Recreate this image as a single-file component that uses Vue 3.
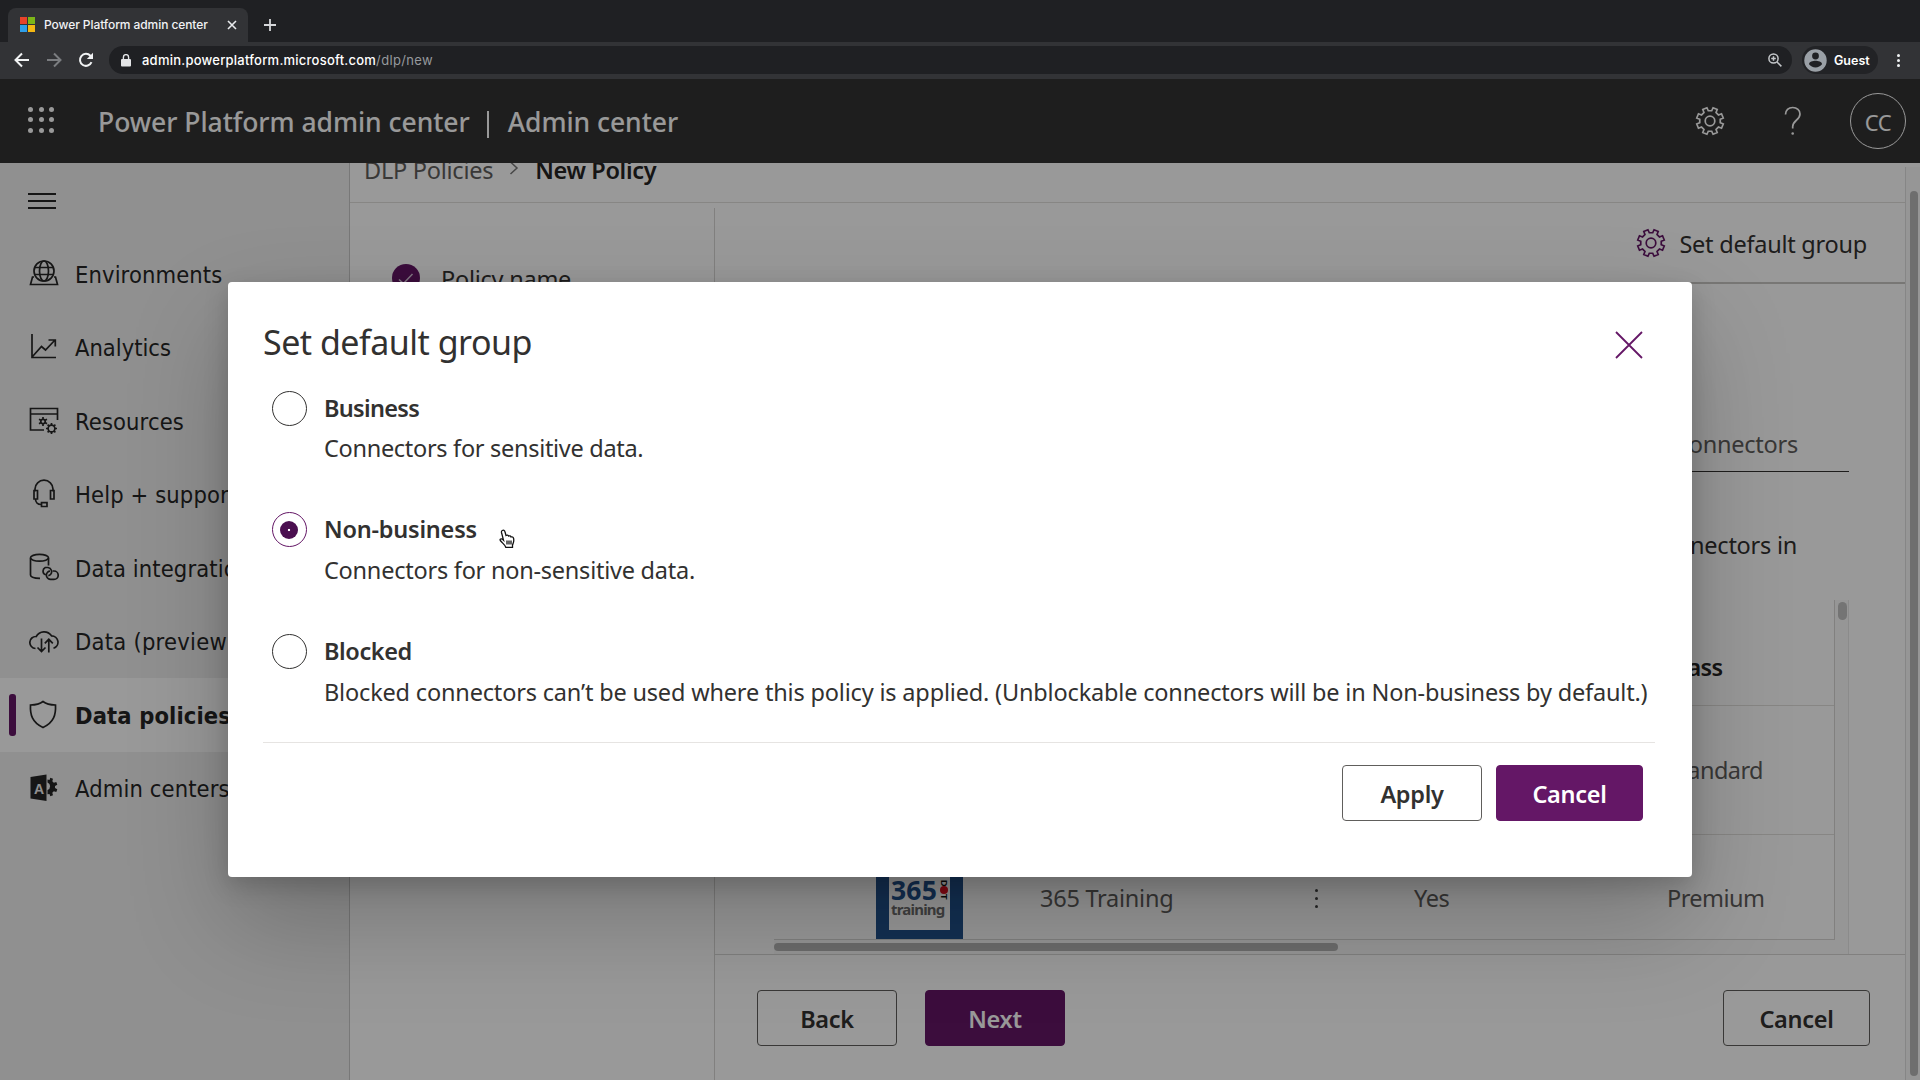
<script setup>
import { ref } from 'vue'

function gearPath(c, outer, inner, top, root) {
  const pts = []
  for (let i = 0; i < 8; i++) {
    const a = 22.5 + i * 45
    for (const [r, d] of [[inner, -root], [outer, -top], [outer, top], [inner, root]]) {
      const t = ((a + d) * Math.PI) / 180
      pts.push(`${(c + r * Math.sin(t)).toFixed(2)} ${(c - r * Math.cos(t)).toFixed(2)}`)
    }
  }
  return `M${pts.join('L')}Z`
}
const gear = gearPath(15, 13.6, 10.4, 9.5, 13)

const nav = [
  { id: 'env', label: 'Environments' },
  { id: 'chart', label: 'Analytics' },
  { id: 'res', label: 'Resources' },
  { id: 'help', label: 'Help + support' },
  { id: 'integ', label: 'Data integration' },
  { id: 'cloud', label: 'Data (preview)' },
  { id: 'shield', label: 'Data policies', active: true },
  { id: 'admin', label: 'Admin centers' },
]

const options = [
  { id: 'business', label: 'Business', text: 'Connectors for sensitive data.' },
  { id: 'non-business', label: 'Non-business', text: 'Connectors for non-sensitive data.' },
  {
    id: 'blocked',
    label: 'Blocked',
    text: 'Blocked connectors can’t be used where this policy is applied. (Unblockable connectors will be in Non-business by default.)',
  },
]
const selected = ref('non-business')
</script>

<template>
  <div class="screen">
    <div class="tabstrip">
      <div class="tab">
        <span class="mslogo"><i></i><i></i><i></i><i></i></span>
        <span class="tab-title">Power Platform admin center</span>
        <svg class="tab-close" width="10" height="10" viewBox="0 0 10 10"><path d="M1 1l8 8M9 1l-8 8" /></svg>
      </div>
      <svg class="tab-add" width="12" height="12" viewBox="0 0 12 12"><path d="M6 0v12M0 6h12" /></svg>
    </div>
    <div class="toolbar">
      <svg class="tb back" width="16" height="16" viewBox="0 0 16 16"><path d="M15 8H2M8 1.5L1.5 8L8 14.5" /></svg>
      <svg class="tb fwd" width="16" height="16" viewBox="0 0 16 16"><path d="M1 8h13M8 1.5L14.5 8L8 14.5" /></svg>
      <svg class="tb reload" width="16" height="16" viewBox="0 0 16 16"><path d="M13.5 10.2A6 6 0 1 1 12.4 3.8L14 5.5" /><path class="fill" d="M15 .8V7H8.8Z" /></svg>
      <div class="address">
        <svg width="10" height="13" viewBox="0 0 10 13"><path d="M1 5h8a1 1 0 0 1 1 1v5.5a1 1 0 0 1-1 1H1a1 1 0 0 1-1-1V6a1 1 0 0 1 1-1z" fill="#e4e5e7" /><path d="M2.4 5.4V3.2a2.6 2.6 0 0 1 5.2 0v2.2" fill="none" stroke="#e4e5e7" stroke-width="1.4" /></svg>
        <span class="url">admin.powerplatform.microsoft.com</span><span class="url dim">/dlp/new</span>
        <svg class="mag" width="14" height="14" viewBox="0 0 14 14"><circle cx="5.5" cy="5.5" r="4.6" /><path d="M9 9l4.4 4.4M5.5 3.2v4.6M3.2 5.5h4.6" /></svg>
      </div>
      <div class="guest">
        <svg width="23" height="23" viewBox="0 0 23 23"><circle cx="11.5" cy="11.5" r="11.2" fill="#9aa0a6" /><circle cx="11.5" cy="7" r="3.4" fill="#202124" /><path d="M5 15.2c0-2.4 4-3.4 6.5-3.4s6.5 1 6.5 3.4c-1.5 2-3.8 3.2-6.5 3.2s-5-1.2-6.5-3.2z" fill="#202124" /></svg>
        <span>Guest</span>
      </div>
      <span class="kebab"><i></i><i></i><i></i></span>
    </div>

    <div class="site">
      <header class="suite">
        <span class="waffle"><i v-for="n in 9" :key="n"></i></span>
        <span class="brand">Power Platform admin center</span>
        <span class="pipe"></span>
        <span class="brand sub">Admin center</span>
        <svg class="suite-gear" width="30" height="30" viewBox="0 0 30 30"><path :d="gear" /><circle cx="15" cy="15" r="4.8" /></svg>
        <svg class="suite-help" width="18" height="30" viewBox="0 0 18 30"><path d="M1.5 8.5C1.5 4 4.5 1.5 8.7 1.5C13 1.5 16 4.3 16 8C16 14 8.7 14.5 8.7 20.5V22.5" /><circle cx="8.7" cy="27.5" r="1.3" /></svg>
        <span class="avatar">CC</span>
      </header>

      <div class="body">
        <nav class="side">
          <span class="burger"><i></i><i></i><i></i></span>
          <a v-for="n in nav" :key="n.id" class="nav" :class="[n.id, { active: n.active }]">
            <svg width="30" height="30" viewBox="0 0 30 30">
              <template v-if="n.id === 'env'">
                <circle cx="15" cy="12" r="10" /><ellipse cx="15" cy="12" rx="4.5" ry="10" /><path d="M5.8 8.5h18.4M5.8 15.5h18.4M5 18H3.5L1.5 25.5h27L26.5 18H25" />
              </template>
              <template v-else-if="n.id === 'chart'">
                <path d="M3 2v23.5h24M3.5 24.5L12.5 14.5L16.5 18L26 8M19.5 8H26.3V14.5" />
              </template>
              <template v-else-if="n.id === 'res'">
                <path d="M15 24H1.5V2.5h27V14M1.5 8h27" />
                <circle cx="14" cy="15.5" r="2.2" /><path d="M14 11v2M14 18v2M10 13.3l2 1M16 16.5l2 1.2M10 17.7l2-1.2M16 14.3l2-1" />
                <circle cx="22.5" cy="22.5" r="3.4" /><path d="M22.5 17v2M22.5 26v2M17 22.5h2M26 22.5h2M18.6 18.6l1.5 1.5M25 25l1.4 1.4M18.6 26.4L20 25M25 20l1.4-1.4" />
              </template>
              <template v-else-if="n.id === 'help'">
                <path d="M6 12.5V10a9 8.8 0 0 1 18 0V12.5M5 11.5h3.5v8.5H5zM21.5 11.5h3.5v8.5h-3.5zM6.5 20C6.5 23 8.5 25.5 12 25.500M12.500 23.700h5.500v3.800h-5.500z" />
              </template>
              <template v-else-if="n.id === 'integ'">
                <ellipse cx="10.5" cy="4.8" rx="9" ry="3.4" /><path d="M1.5 5V22c0 2 4 3.300 9.500 3.400M19.500 5V12.500" />
                <path d="M16.500 21.800A4 4 0 0 1 16.300 14.500H19A4.200 4.200 0 0 1 21.500 21.500C20.800 22.300 20 22.600 19.300 22.600M23.800 18H25a4.200 4.200 0 0 1 0 8.400h-3.500a4.200 4.200 0 0 1-2.800-7.200C19.300 18.600 20.300 18.200 21 18.200" />
              </template>
              <template v-else-if="n.id === 'cloud'">
                <path d="M6.500 22.500A6 6 0 0 1 7.200 10.500A9 9 0 0 1 22.500 9.800A6.400 6.400 0 0 1 24.500 22.300M12.500 12.500V25M8.500 21.500l4 4l4-4M19.800 26.500V13.500M15.800 17.300l4-4l4 4" />
              </template>
              <template v-else-if="n.id === 'shield'">
                <path d="M14 1.500C10.500 4.300 6 5 1.500 5C1 14.500 3 22.500 14 27.500C25 22.500 27 14.500 26.500 5C22 5 17.500 4.300 14 1.500Z" />
              </template>
              <template v-else>
                <path class="solid" d="M1.500 4L17.500 1.500V28L1.500 25.500Z" />
                <path class="solid" d="M18.500 5l2 .5l.8-2.300l2.700 1l-.7 2.500l1.500 1.600l2.500-.8l1 2.700l-2.300 1.200v2.200l2.300 1.200l-1 2.700l-2.500-.7l-1.500 1.500l.7 2.500l-2.700 1l-.8-2.300l-2 .3v-4.300a4 4 0 0 0 0-7.500z" transform="translate(0 1.5)" />
                <text x="5" y="20.5">A</text>
              </template>
            </svg>
            <span>{{ n.label }}</span>
          </a>
        </nav>

        <main class="main">
          <div class="crumbs">
            <span class="crumb">DLP Policies</span>
            <svg width="10" height="14" viewBox="0 0 10 14"><path d="M1.500 1L8 7L1.500 13" /></svg>
            <span class="crumb here">New Policy</span>
          </div>
          <div class="split">
            <aside class="steps">
              <div class="step">
                <svg width="28" height="28" viewBox="0 0 28 28"><circle cx="14" cy="14" r="14" /><path d="M7 15.5l4.500 4L20.500 10" /></svg>
                <span>Policy name</span>
              </div>
            </aside>
            <section class="content">
              <div class="command">
                <svg width="30" height="30" viewBox="0 0 30 30"><path :d="gear" /><circle cx="15" cy="15" r="4.8" /></svg>
                <span>Set default group</span>
              </div>
              <div class="search">Search connectors</div>
              <div class="hint">connectors in</div>
              <div class="grid">
                <div class="rows">
                  <div class="row head"><b class="c-class">Class</b></div>
                  <div class="row"><span class="c-class">Standard</span></div>
                  <div class="row">
                    <div class="logo">
                      <div class="plate">
                        <div class="l1"><b>365</b><em>D<i></i>T</em></div>
                        <div class="l2">training</div>
                      </div>
                    </div>
                    <span class="c-name">365 Training</span>
                    <span class="c-more"><i></i><i></i><i></i></span>
                    <span class="c-yes">Yes</span>
                    <span class="c-class">Premium</span>
                  </div>
                </div>
                <div class="vtrack"><i></i></div>
                <div class="htrack"><i></i></div>
              </div>
              <footer class="foot">
                <button class="btn">Back</button>
                <button class="btn primary">Next</button>
                <button class="btn wide">Cancel</button>
              </footer>
            </section>
          </div>
        </main>
        <div class="pagebar"><i></i></div>
      </div>

      <div class="overlay">
        <div class="dialog" role="dialog">
          <div class="dlg-head">
            <h2>Set default group</h2>
            <svg width="28" height="28" viewBox="0 0 28 28"><path d="M1 1l26 26M27 1L1 27" /></svg>
          </div>
          <label v-for="o in options" :key="o.id" class="opt" :class="o.id" @click="selected = o.id">
            <span class="radio" :class="{ on: selected === o.id }"></span>
            <span class="opt-text">
              <b>{{ o.label }}</b>
              <span>{{ o.text }}</span>
            </span>
          </label>
          <div class="dlg-foot">
            <button class="btn">Apply</button>
            <button class="btn primary wide">Cancel</button>
          </div>
        </div>
      </div>
      <svg class="cursor" width="17" height="20" viewBox="0 0 17 20"><path d="M3.3 1.5C4.5.8 5.6 1.3 5.9 2.5L7 6.5C8 5.8 9.2 6 9.6 7C10.6 6.5 11.6 6.9 12 7.9C13.2 7.5 14.3 8.2 14.6 9.5C15.3 12.5 14.3 14 13.5 16V18.3H6.8C6 15.5 3.5 14.5 1.3 11.5C.6 10.3 2 9.3 3.3 10.1L4.5 11.2L2.5 3.5C2.3 2.5 2.5 1.9 3.3 1.5Z" /><path d="M8 11.5v4M10 11.5v4M12 11.5v4" /></svg>
    </div>
  </div>
</template>

<style>
body { margin: 0; background: #1f1f1f; overflow: hidden; }
</style>

<style scoped>
* { box-sizing: border-box; }
.screen { width: 1920px; height: 1080px; overflow: hidden; display: flex; flex-direction: column; font-family: "Noto Sans", "Open Sans", sans-serif; font-size: 23.5px; letter-spacing: -0.25px; color: #323130; }
svg { display: block; flex: none; fill: none; }
span, b, h2, button { white-space: nowrap; }

.tabstrip { height: 42px; flex: none; background: #1f2023; display: flex; padding: 8px 0 0 8px; font-family: Inter, sans-serif; }
.tab { width: 240px; height: 34px; border-radius: 8px 8px 0 0; background: #323336; display: flex; align-items: center; padding: 0 12px 1px; }
.mslogo { display: grid; grid-template-columns: 7px 7px; grid-auto-rows: 7px; gap: 1px; margin-right: 9px; }
.mslogo i:nth-child(1) { background: #e8432a; }
.mslogo i:nth-child(2) { background: #7cb518; }
.mslogo i:nth-child(3) { background: #2f9fe8; }
.mslogo i:nth-child(4) { background: #f5b813; }
.tab-title { flex: 1; font-size: 12px; font-weight: 500; letter-spacing: -0.08px; color: #f1f2f4; }
.tab-close { margin-right: -1px; }
.tab-close path { stroke: #e8eaed; stroke-width: 1.6; }
.tab-add { margin: 11px 0 0 16px; }
.tab-add path { stroke: #d5d7da; stroke-width: 1.8; }

.toolbar { height: 37px; flex: none; background: #323336; display: flex; align-items: center; padding-bottom: 1px; font-family: Inter, sans-serif; }
.tb path { stroke: #f1f3f4; stroke-width: 2; }
.tb.back { margin-left: 14px; }
.tb.fwd { margin-left: 16px; }
.tb.fwd path { stroke: #7b7d80; }
.tb.reload { margin-left: 16px; }
.tb .fill { fill: #f1f3f4; stroke: none; }
.address { margin-left: 15px; width: 1683px; height: 28px; border-radius: 14px; background: #1f2023; display: flex; align-items: center; padding: 0 10px 0 12px; }
.url { font-size: 13px; font-weight: 500; letter-spacing: 0.23px; color: #fff; margin-left: 11px; }
.url.dim { color: #96999d; font-weight: 400; letter-spacing: 0.35px; margin-left: 0; }
.mag { margin-left: auto; }
.mag circle, .mag path { stroke: #c4c7ca; stroke-width: 1.5; }
.guest { margin-left: 10px; width: 76px; height: 28px; border-radius: 14px; background: #222326; display: flex; align-items: center; padding-left: 2px; color: #fff; font-size: 12.5px; font-weight: 600; letter-spacing: 0; }
.guest span { margin-left: 7px; }
.kebab { display: flex; flex-direction: column; gap: 2px; margin-left: 19px; }
.kebab i { width: 3px; height: 3px; border-radius: 2px; background: #f1f3f4; }

.site { position: relative; flex: 1; min-height: 0; display: flex; flex-direction: column; background: #fff; }
.suite { height: 84px; flex: none; background: #333; color: #fff; display: flex; align-items: center; padding-left: 28px; }
.waffle { display: grid; grid-template-columns: repeat(3, 5px); gap: 5.5px; margin-top: -3px; }
.waffle i { height: 5px; border-radius: 50%; background: #fff; }
.brand { font-size: 26.5px; line-height: 36px; font-weight: 500; letter-spacing: -0.04px; margin: 2px 0 0 44px; }
.pipe { width: 2px; height: 27px; background: #fff; margin: 6px 0 0 17px; }
.brand.sub { margin-left: 19px; }
.suite-gear { margin-left: auto; }
.suite svg path, .suite svg circle { stroke: #fff; stroke-width: 1.7; }
.suite-help { margin-left: 59px; }
.suite .suite-help circle { fill: #fff; stroke: none; }
.avatar { width: 56px; height: 56px; border: 1.5px solid #fff; border-radius: 50%; margin: 0 14px 0 48px; display: flex; align-items: center; justify-content: center; font-size: 22px; padding-top: 2px; letter-spacing: -0.5px; }

.body { flex: 1; min-height: 0; display: flex; }
.side { width: 350px; flex: none; background: #f0f0f0; border-right: 1px solid #c8c8c8; color: #262626; font-family: "DejaVu Sans Condensed", "DejaVu Sans", sans-serif; letter-spacing: 0.12px; display: flex; flex-direction: column; }
.burger { display: flex; flex-direction: column; gap: 5px; padding: 30px 0 0 28px; height: 74px; flex: none; }
.burger i { width: 28px; height: 2px; background: #262626; }
.nav { height: 73.5px; flex: none; display: flex; align-items: center; padding-left: 29px; position: relative; }
.nav span { padding-top: 2px; }
.nav svg { margin-right: 16px; }
.nav svg * { stroke: #262626; stroke-width: 1.7; }
.nav svg .solid { fill: #262626; stroke: none; }
.nav svg text { fill: #f0f0f0; stroke: none; font: bold 14px "Liberation Sans", sans-serif; }
.nav.chart { letter-spacing: 0; }
.nav.cloud { letter-spacing: 0.25px; }
.nav.active { background: #fff; font-weight: 700; }
.nav.active::before { content: ""; position: absolute; left: 9px; top: 16px; width: 7px; height: 42px; border-radius: 3px; background: #641766; }

.main { flex: 1; min-width: 0; display: flex; flex-direction: column; overflow: hidden; }
.crumbs { height: 40px; flex: none; border-bottom: 1px solid #e1dfdd; display: flex; align-items: center; padding: 0 0 25px 14px; overflow: hidden; }
.crumb { color: #605e5c; }
.crumbs svg { margin: -5px 16px 0 16px; }
.crumbs path { stroke: #777; stroke-width: 1.5; }
.crumb.here { color: #252423; font-weight: 600; letter-spacing: -0.35px; }
.split { flex: 1; min-height: 0; display: flex; }
.steps { width: 365px; flex: none; margin-top: 5px; border-right: 1px solid #d8d6d4; }
.step { display: flex; align-items: center; margin: 55px 0 0 42px; }
.step svg { margin: -3px 21px 0 0; }
.step circle { fill: #641766; }
.step path { stroke: #d9c4da; stroke-width: 1.5; }
.content { flex: 1; min-width: 0; display: flex; flex-direction: column; }
.command { height: 81px; flex: none; border-bottom: 2px solid #c8c6c4; display: flex; align-items: center; justify-content: flex-end; padding-right: 38px; color: #323130; }
.command svg { margin-right: 13px; }
.command span { padding-top: 3px; }
.command path, .command circle { stroke: #641766; stroke-width: 1.7; }
.search { margin: 135px 56px 0 auto; width: 260px; height: 53px; flex: none; border-bottom: 1px solid #323130; padding: 8px 51px 0 0; text-align: right; color: #605e5c; line-height: 34px; }
.hint { height: 34px; flex: none; line-height: 34px; margin-top: 56px; padding-right: 108px; text-align: right; }
.grid { flex: none; height: 354px; margin: 38px 56px 0 59px; display: grid; grid-template-columns: 1061px 1fr; grid-template-rows: 340px 14px; }
.rows { overflow: hidden; border-right: 1px solid #d8d6d4; border-bottom: 1px solid #d8d6d4; }
.row { height: 128.5px; border-bottom: 1px solid #e1dfdd; display: grid; grid-template-columns: 102px 164px 270px 104px 253px 1fr; align-items: center; color: #605e5c; }
.row > * { grid-row: 1; }
.row.head { height: 106px; color: #252423; padding-top: 28px; }
.row.head b { font-weight: 600; letter-spacing: -0.6px; }
.logo { grid-column: 2; width: 87px; height: 87px; background: #20508a; padding: 13px; }
.plate { height: 62px; background: #fff; padding: 12px 2px 0; }
.l1 { display: flex; height: 20px; }
.l1 b { width: 49px; font: bold 26.5px/20px "Noto Sans", sans-serif; letter-spacing: 0.2px; color: #20508a; }
.l1 em { display: flex; align-items: center; writing-mode: vertical-rl; font: bold 9px/9px "Liberation Sans", sans-serif; letter-spacing: 0; color: #111; }
.l1 em i { width: 8px; height: 8px; flex: none; border-radius: 50%; background: #e01020; }
.l2 { font: bold 15px/18px "Noto Sans", sans-serif; color: #6d6d6d; letter-spacing: -0.8px; }
.c-name { grid-column: 3; }
.c-more { grid-column: 4; display: flex; flex-direction: column; gap: 5px; padding-left: 5px; }
.c-more i { width: 3px; height: 3px; border-radius: 50%; background: #444; }
.c-yes { grid-column: 5; letter-spacing: -0.5px; }
.c-class { grid-column: 6; letter-spacing: -0.55px; }
.vtrack { grid-row: 1 / 3; grid-column: 2; background: #fafafa; border-right: 1px solid #e8e8e8; padding: 2px 0 0 3px; }
.vtrack i { display: block; width: 9px; height: 18px; border-radius: 5px; background: #c1c1c1; }
.htrack { grid-row: 2; grid-column: 1; padding-top: 3px; background: #fafafa; }
.htrack i { display: block; width: 564px; height: 8px; border-radius: 4px; background: #b5b5b5; }
.foot { flex: 1; border-top: 1px solid #d8d6d4; display: flex; align-items: flex-start; padding: 35px 35px 0 42px; gap: 28px; }
.foot .wide { margin-left: auto; }
.btn { width: 140px; height: 56px; padding: 1px 0 0; border: 1px solid #605e5c; border-radius: 4px; background: #fff; color: #323130; font: 600 23.5px "Noto Sans", sans-serif; letter-spacing: -0.3px; }
.btn.primary { background: #641766; border-color: #641766; color: #fff; }
.btn.wide { width: 147px; }
.pagebar { width: 15px; flex: none; margin-top: 4px; background: #fafafa; border-left: 1px solid #e0e0e0; padding: 24px 0 0 4px; }
.pagebar i { display: block; width: 8px; height: 885px; border-radius: 4px; background: #b8b8b8; }

.overlay { position: absolute; inset: 0; background: rgba(0, 0, 0, 0.4); display: flex; align-items: flex-start; justify-content: flex-start; padding: 203px 0 0 228px; }
.dialog { width: 1464px; height: 595px; background: #fff; border-radius: 4px; box-shadow: 0 45px 101px rgba(0, 0, 0, 0.22), 0 8px 25px rgba(0, 0, 0, 0.18); padding: 36px 37px 0 35px; }
.dlg-head { display: flex; justify-content: space-between; height: 60px; }
.dlg-head h2 { margin: 0; font-size: 34px; font-weight: 400; line-height: 48px; letter-spacing: -0.5px; }
.dlg-head svg { margin: 13px 12px 0 0; }
.dlg-head path { stroke: #641766; stroke-width: 1.8; }
.opt { display: flex; height: 121px; padding: 13px 0 0 8.5px; }
.opt.non-business { height: 122px; }
.radio { width: 35px; height: 35px; flex: none; border: 1.5px solid #323130; border-radius: 50%; margin-right: 17.5px; display: flex; align-items: center; justify-content: center; }
.radio.on { border-color: #641766; }
.radio.on::after { content: ""; width: 18px; height: 18px; border-radius: 50%; background: radial-gradient(circle, #fff 0 1px, #4b0f50 1.6px); }
.opt-text { display: flex; flex-direction: column; line-height: 40.5px; margin-top: -3px; }
.opt.business .opt-text { line-height: 40px; }
.opt b { font-weight: 600; letter-spacing: -0.4px; }
.opt.business b { letter-spacing: -0.7px; }
.opt.non-business b { letter-spacing: -0.22px; }
.opt-text span { letter-spacing: -0.24px; }
.opt.business span { letter-spacing: -0.3px; }
.opt.blocked span { letter-spacing: -0.175px; }
.dlg-foot { display: flex; justify-content: flex-end; gap: 14px; border-top: 1px solid #e6e4e2; padding: 22px 12px 0 0; }
.dlg-foot .btn { flex: none; padding-top: 2px; }
.cursor { position: absolute; left: 499px; top: 450px; }
.cursor path { fill: #fff; stroke: #111; stroke-width: 1.3; }
</style>
